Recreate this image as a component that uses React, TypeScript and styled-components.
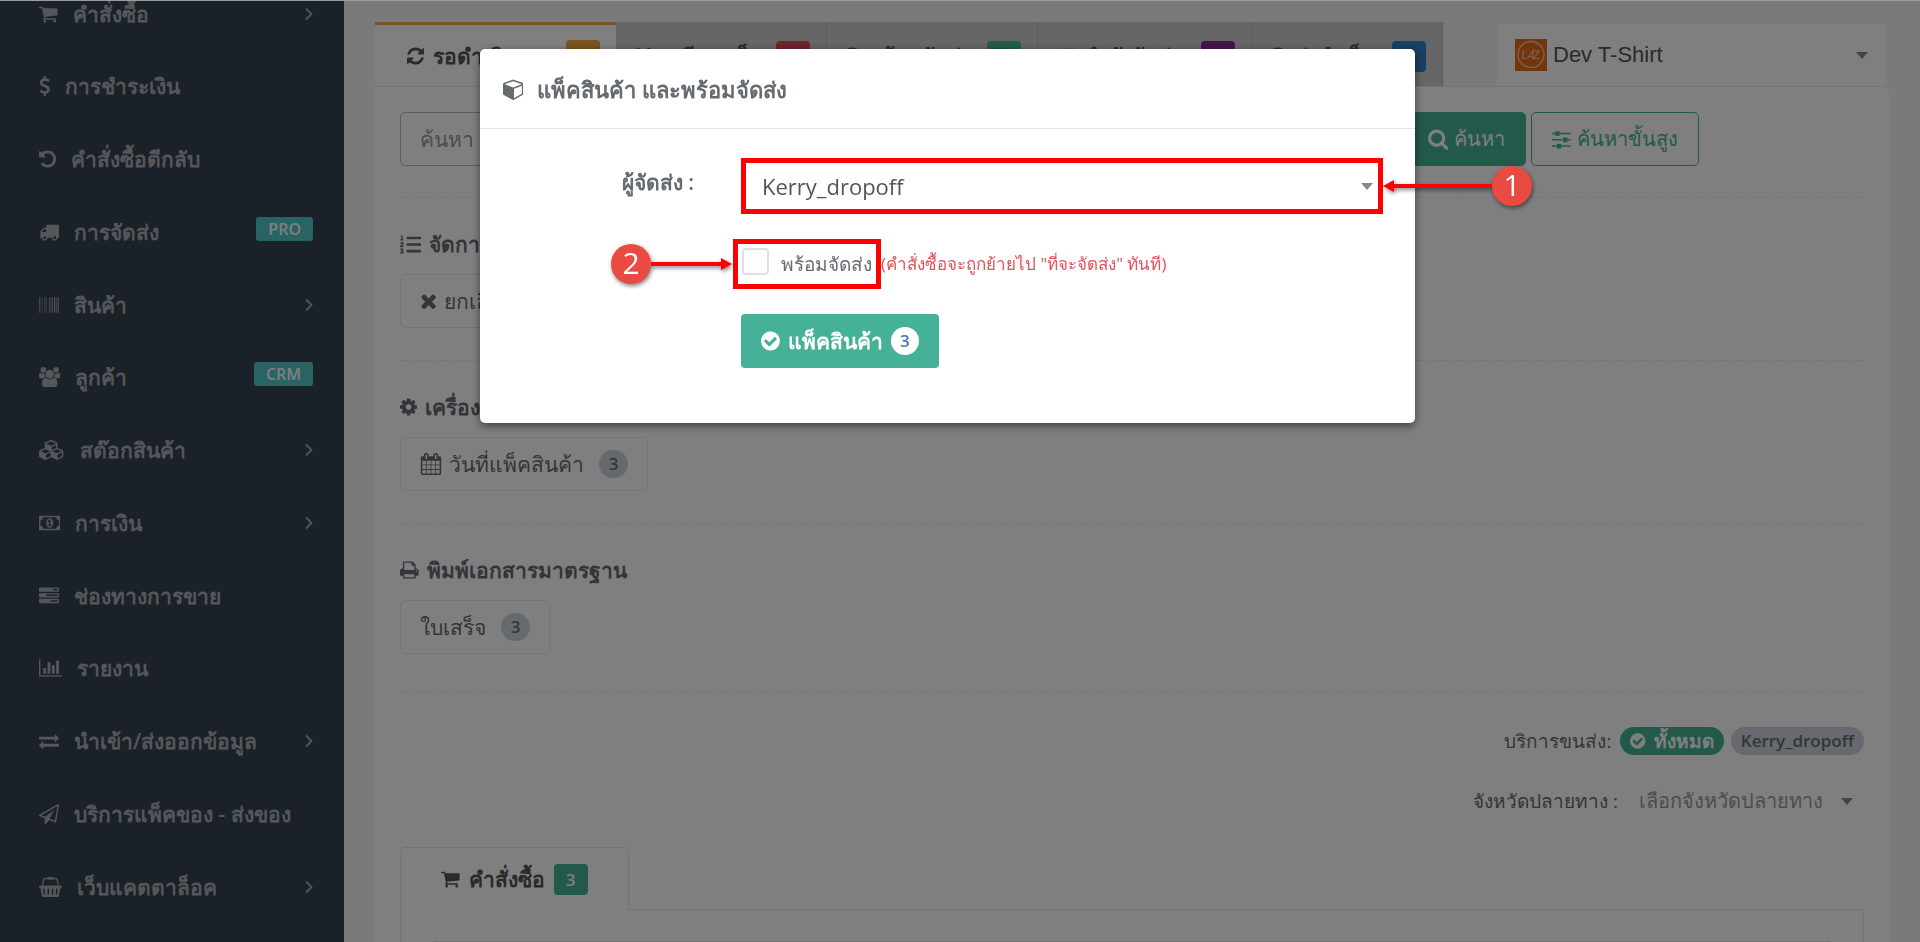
import React from "react";
import styled, { createGlobalStyle } from "styled-components";
import { FaDropbox, FaListOl } from "react-icons/fa";

const GlobalStyle = createGlobalStyle`
  *, *::before, *::after { box-sizing: border-box; }
  body {
    margin: 0;
    background: #f4f4f4;
    color: #666b70;
    font-family: "Open Sans", sans-serif;
    font-size: 21px;
    line-height: 28px;
  }
  button, input, select { font: inherit; color: inherit; margin: 0; }
  button { cursor: pointer; }
`;

/* ---------- icons ---------- */

const ICONS: Record<string, [number, string]> = {
  cart: [1664, "M640 1536q0 52-38 90t-90 38-90-38-38-90 38-90 90-38 90 38 38 90zm896 0q0 52-38 90t-90 38-90-38-38-90 38-90 90-38 90 38 38 90zm128-1088v512q0 24-16.500 42.500t-40.500 21.500l-1044 122q13 60 13 70 0 16-24 64h920q26 0 45 19t19 45-19 45-45 19h-1024q-26 0-45-19t-19-45q0-11 8-31.500t16-36 21.500-40 15.500-29.500l-177-823h-204q-26 0-45-19t-19-45 19-45 45-19h256q16 0 28.500 6.500t19.500 15.500 13 24.500 8 26 5.500 29.500 4.500 26h1201q26 0 45 19t19 45z"],
  dollar: [1024, "M978 1185q0 153-99.500 263.500t-258.500 136.500v175q0 14-9 23t-23 9h-135q-13 0-22.500-9.500t-9.500-22.500v-175q-66-9-127.500-31t-101.500-44.500-74-48-46.500-37.500-17.500-18q-17-21-2-41l103-135q7-10 23-12 15-2 24 9l2 2q113 99 243 125 37 8 74 8 81 0 142.500-43t61.500-122q0-28-15-53t-33.500-42-58.500-37.500-66-32-80-32.500q-39-16-61.500-25t-61.500-26.500-62.500-31-56.500-35.500-53.500-42.500-43.500-49-35.500-58-21-66.500-8.500-78q0-138 98-242t255-134v-180q0-13 9.500-22.500t22.500-9.500h135q14 0 23 9t9 23v176q57 6 110.500 23t87 33.500 63.500 37.500 39 29 15 14q17 18 5 38l-81 146q-8 15-23 16-14 3-27-7-3-3-14.500-12t-39-26.500-58.500-32-74.500-26-85.500-11.500q-95 0-155 43t-60 111q0 26 8.500 48t29.500 41.500 39.500 33 56 31 60.500 27 70 27.500q53 20 81 31.500t76 35 75.500 42.500 62 50 53 63.500 31.500 76.500 13 94z"],
  undo: [1536, "M1536 896q0 156-61 298t-164 245-245 164-298 61q-172 0-327-72.500t-264-204.500q-7-10-6.500-22.500t8.500-20.500l137-138q10-9 25-9 16 2 23 12 73 95 179 147t225 52q104 0 198.500-40.500t163.500-109.500 109.500-163.500 40.500-198.500-40.500-198.500-109.500-163.500-163.500-109.500-198.500-40.500q-98 0-188 35.500t-160 101.500l137 138q31 30 14 69-17 40-59 40h-448q-26 0-45-19t-19-45v-448q0-42 40-59 39-17 69 14l130 129q107-101 244.500-156.500t284.500-55.500q156 0 298 61t245 164 164 245 61 298z"],
  truck: [1792, "M640 1408q0-52-38-90t-90-38-90 38-38 90 38 90 90 38 90-38 38-90zm-384-512h384v-256h-158q-13 0-22 9l-195 195q-9 9-9 22v30zm1280 512q0-52-38-90t-90-38-90 38-38 90 38 90 90 38 90-38 38-90zm256-1088v1024q0 15-4 26.500t-13.500 18.500-16.500 11.500-23.500 6-22.500 2-25.500 0-22.500-.5q0 106-75 181t-181 75-181-75-75-181h-384q0 106-75 181t-181 75-181-75-75-181h-64q-3 0-22.500.5t-25.500 0-22.500-2-23.500-6-16.500-11.500-13.500-18.500-4-26.500q0-26 19-45t45-19v-320q0-8-.5-35t0-38 2.500-34.500 6.500-37 14-30.500 22.500-30l198-198q19-19 50.500-32t58.500-13h160v-192q0-26 19-45t45-19h1024q26 0 45 19t19 45z"],
  barcode: [1792, "M63 1600h-63v-1408h63v1408zm63-1h-32v-1407h32v1407zm220 0h-31v-1407h31v1407zm157 0h-31v-1407h31v1407zm157 0h-62v-1407h62v1407zm315 0h-63v-1407h63v1407zm126 0h-63v-1407h63v1407zm126 0h-63v-1407h63v1407zm220 0h-94v-1407h94v1407zm126 0h-63v-1407h63v1407zm126 0h-31v-1407h31v1407zm94 1h-62v-1408h62v1408z"],
  users: [1920, "M593 896q-162 5-265 128h-134q-82 0-138-40.500t-56-118.500q0-353 124-353 6 0 43.500 21t97.500 42.500 119 21.500q67 0 133-23-5 37-5 66 0 159 81 256zm1071 637q0 120-73 189.500t-194 69.500h-874q-121 0-194-69.500t-73-189.500q0-53 3.500-103.500t14-109 26.500-108.500 43-97.500 62-81 85.500-53.500 111.500-20q10 0 43 21.500t73 48 107 48 135 21.500 135-21.500 107-48 73-48 43-21.500q61 0 111.500 20t85.500 53.500 62 81 43 97.500 26.500 108.500 14 109 3.500 103.500zm-1024-1277q0 106-75 181t-181 75-181-75-75-181 75-181 181-75 181 75 75 181zm704 384q0 159-112.500 271.500t-271.500 112.500-271.500-112.500-112.500-271.500 112.500-271.500 271.500-112.500 271.500 112.500 112.500 271.500zm576 225q0 78-56 118.500t-138 40.500h-134q-103-123-265-128 81-97 81-256 0-29-5-66 66 23 133 23 59 0 119-21.500t97.500-42.500 43.500-21q124 0 124 353zm-128-609q0 106-75 181t-181 75-181-75-75-181 75-181 181-75 181 75 75 181z"],
  cubes: [2304, "M640 1632l384-192v-314l-384 164v342zm-64-454l404-173-404-173-404 173zm1088 454l384-192v-314l-384 164v342zm-64-454l404-173-404-173-404 173zm-448-293l384-165v-266l-384 164v267zm-64-379l441-189-441-189-441 189zm1088 518v416q0 36-19 67t-52 47l-448 224q-25 14-57 14t-57-14l-448-224q-4-2-7-4-2 2-7 4l-448 224q-25 14-57 14t-57-14l-448-224q-33-16-52-47t-19-67v-416q0-38 21.500-70t56.500-48l434-186v-400q0-38 21.500-70t56.500-48l448-192q23-10 50-10t50 10l448 192q35 16 56.500 48t21.500 70v400l434 186q36 16 57 48t21 70z"],
  money: [1920, "M768 1152h384v-96h-128v-448h-114l-148 137 77 80q42-37 55-57h2v288h-128v96zm512-256q0 70-21 142t-59.500 134-101.500 101-138 39-138-39-101.500-101-59.500-134-21-142 21-142 59.500-134 101.500-101 138-39 138 39 101.500 101 59.500 134 21 142zm512 256v-512q-106 0-181-75t-75-181h-1152q0 106-75 181t-181 75v512q106 0 181 75t75 181h1152q0-106 75-181t181-75zm128-832v1152q0 26-19 45t-45 19h-1792q-26 0-45-19t-19-45v-1152q0-26 19-45t45-19h1792q26 0 45 19t19 45z"],
  tasks: [1792, "M1024 1408h640v-128h-640v128zm-384-512h1024v-128h-1024v128zm640-512h384v-128h-384v128zm512 832v256q0 26-19 45t-45 19h-1664q-26 0-45-19t-19-45v-256q0-26 19-45t45-19h1664q26 0 45 19t19 45zm0-512v256q0 26-19 45t-45 19h-1664q-26 0-45-19t-19-45v-256q0-26 19-45t45-19h1664q26 0 45 19t19 45zm0-512v256q0 26-19 45t-45 19h-1664q-26 0-45-19t-19-45v-256q0-26 19-45t45-19h1664q26 0 45 19t19 45z"],
  chart: [2048, "M640 896v512h-256v-512h256zm384-512v1024h-256v-1024h256zm1024 1152v128h-2048v-1536h128v1408h1920zm-640-896v768h-256v-768h256zm384-384v1152h-256v-1152h256z"],
  exchange: [1792, "M1792 1184v192q0 13-9.500 22.500t-22.500 9.500h-1376v192q0 13-9.500 22.500t-22.500 9.500q-12 0-24-10l-319-320q-9-9-9-22 0-14 9-23l320-320q9-9 23-9 13 0 22.500 9.500t9.500 22.500v192h1376q13 0 22.500 9.500t9.500 22.500zm0-544q0 14-9 23l-320 320q-9 9-23 9-13 0-22.500-9.500t-9.500-22.500v-192h-1376q-13 0-22.500-9.500t-9.500-22.500v-192q0-13 9.500-22.500t22.500-9.500h1376v-192q0-14 9-23t23-9q12 0 24 10l319 319q9 9 9 23z"],
  plane: [1792, "M1764 11q33 24 27 64l-256 1536q-5 29-32 45-14 8-31 8-11 0-24-5l-527-215-298 327q-18 21-47 21-14 0-23-4-19-7-30-23.500t-11-36.500v-452l-472-193q-37-14-40-55-3-39 32-59l1664-960q35-21 68 2zm-342 1499l221-1323-1434 827 336 137 863-639-478 797z"],
  basket: [2048, "M1920 768q53 0 90.500 37.500t37.500 90.500-37.500 90.500-90.500 37.500h-15l-115 662q-8 46-44 76t-82 30h-1280q-46 0-82-30t-44-76l-115-662h-15q-53 0-90.500-37.500t-37.500-90.500 37.500-90.500 90.500-37.500h1792zm-1435 800q26-2 43.500-22.500t15.500-46.500l-32-416q-2-26-22.500-43.500t-46.500-15.500-43.500 22.500-15.500 46.500l32 416q2 25 20.500 42t43.500 17h5zm411-64v-416q0-26-19-45t-45-19-45 19-19 45v416q0 26 19 45t45 19 45-19 19-45zm384 0v-416q0-26-19-45t-45-19-45 19-19 45v416q0 26 19 45t45 19 45-19 19-45zm352 5l32-416q2-26-15.500-46.500t-43.500-22.500-46.500 15.500-22.500 43.500l-32 416q-2 26 15.500 46.500t43.500 22.500h5q25 0 43.500-17t20.500-42zm-1156-1217l-93 412h-132l101-441q19-88 89-143.500t160-55.500h167q0-26 19-45t45-19h384q26 0 45 19t19 45h167q90 0 160 55.500t89 143.500l101 441h-132l-93-412q-11-44-45.500-72t-79.500-28h-167q0 26-19 45t-45 19h-384q-26 0-45-19t-19-45h-167q-45 0-79.500 28t-45.500 72z"],
  times: [1408, "M1298 1322q0 40-28 68l-136 136q-28 28-68 28t-68-28l-294-294-294 294q-28 28-68 28t-68-28l-136-136q-28-28-28-68t28-68l294-294-294-294q-28-28-28-68t28-68l136-136q28-28 68-28t68 28l294 294 294-294q28-28 68-28t68 28l136 136q28 28 28 68t-28 68l-294 294 294 294q28 28 28 68z"],
  cog: [1536, "M1024 896q0-106-75-181t-181-75-181 75-75 181 75 181 181 75 181-75 75-181zm512-109v222q0 12-8 23t-20 13l-185 28q-19 54-39 91 35 50 107 138 10 12 10 25t-9 23q-27 37-99 108t-94 71q-12 0-26-9l-138-108q-44 23-91 38-16 136-29 186-7 28-36 28h-222q-14 0-24.500-8.500t-11.500-21.500l-28-184q-49-16-90-37l-141 107q-10 9-25 9-14 0-25-11-126-114-165-168-7-10-7-23 0-12 8-23 15-21 51-66.500t54-70.500q-27-50-41-99l-183-27q-13-2-21-12.500t-8-23.500v-222q0-12 8-23t19-13l186-28q14-46 39-92-40-57-107-138-10-12-10-24 0-10 9-23 26-36 98.500-107.500t94.500-71.500q13 0 26 10l138 107q44-23 91-38 16-136 29-186 7-28 36-28h222q14 0 24.500 8.500t11.500 21.500l28 184q49 16 90 37l142-107q9-9 24-9 13 0 25 10 129 119 165 170 7 8 7 22 0 12-8 23-15 21-51 66.500t-54 70.500q26 50 41 98l183 28q13 2 21 12.500t8 23.500z"],
  calendar: [1792, "M192 1664h288v-288h-288v288zm352 0h320v-288h-320v288zm-352-352h288v-320h-288v320zm352 0h320v-320h-320v320zm-352-384h288v-288h-288v288zm736 736h320v-288h-320v288zm-384-736h320v-288h-320v288zm768 736h288v-288h-288v288zm-384-352h320v-320h-320v320zm-352-864v-288q0-13-9.500-22.500t-22.500-9.500h-64q-13 0-22.500 9.500t-9.500 22.500v288q0 13 9.500 22.500t22.500 9.500h64q13 0 22.500-9.500t9.500-22.500zm736 864h288v-320h-288v320zm-384-384h320v-288h-320v288zm384 0h288v-288h-288v288zm32-480v-288q0-13-9.500-22.500t-22.500-9.500h-64q-13 0-22.500 9.500t-9.500 22.500v288q0 13 9.500 22.500t22.500 9.500h64q13 0 22.500-9.500t9.500-22.500zm384-64v1280q0 52-38 90t-90 38h-1408q-52 0-90-38t-38-90v-1280q0-52 38-90t90-38h128v-96q0-66 47-113t113-47h64q66 0 113 47t47 113v96h384v-96q0-66 47-113t113-47h64q66 0 113 47t47 113v96h128q52 0 90 38t38 90z"],
  print: [1664, "M384 1536h896v-256h-896v256zm0-640h896v-384h-160q-40 0-68-28t-28-68v-160h-640v640zm1152 64q0-26-19-45t-45-19-45 19-19 45 19 45 45 19 45-19 19-45zm128 0v416q0 13-9.500 22.500t-22.500 9.500h-224v160q0 40-28 68t-68 28h-960q-40 0-68-28t-28-68v-160h-224q-13 0-22.500-9.500t-9.500-22.500v-416q0-79 56.500-135.500t135.500-56.500h64v-544q0-40 28-68t68-28h672q40 0 88 20t76 48l152 152q28 28 48 76t20 88v256h64q79 0 135.500 56.500t56.500 135.500z"],
  check: [1536, "M1284 734q0-28-18-46l-91-90q-19-19-45-19t-45 19l-408 407-226-226q-19-19-45-19t-45 19l-91 90q-18 18-18 46 0 27 18 45l362 362q19 19 45 19 27 0 46-19l543-543q18-18 18-45zm252 162q0 209-103 385.500t-279.500 279.500-385.500 103-385.500-103-279.500-279.500-103-385.500 103-385.500 279.500-279.500 385.500-103 385.500 103 279.500 279.500 103 385.500z"],
  search: [1664, "M1152 832q0-185-131.500-316.500t-316.500-131.500-316.500 131.500-131.500 316.500 131.500 316.500 316.500 131.500 316.500-131.500 131.500-316.500zm512 832q0 52-38 90t-90 38q-54 0-90-38l-343-342q-179 124-399 124-143 0-273.500-55.500t-225-150-150-225-55.500-273.500 55.500-273.500 150-225 225-150 273.500-55.500 273.500 55.500 225 150 150 225 55.500 273.500q0 220-124 399l343 343q37 37 37 90z"],
  sliders: [1536, "M352 1408v128h-352v-128h352zm352-128q26 0 45 19t19 45v256q0 26-19 45t-45 19h-256q-26 0-45-19t-19-45v-256q0-26 19-45t45-19h256zm160-384v128h-864v-128h864zm-640-512v128h-224v-128h224zm1312 1024v128h-736v-128h736zm-960-1152q26 0 45 19t19 45v256q0 26-19 45t-45 19h-256q-26 0-45-19t-19-45v-256q0-26 19-45t45-19h256zm640 512q26 0 45 19t19 45v256q0 26-19 45t-45 19h-256q-26 0-45-19t-19-45v-256q0-26 19-45t45-19h256zm320 128v128h-224v-128h224zm0-512v128h-864v-128h864z"],
  refresh: [1536, "M1511 1056q0 5-1 7-64 268-268 434.500t-478 166.500q-146 0-282.500-55t-243.500-157l-129 129q-19 19-45 19t-45-19-19-45v-448q0-26 19-45t45-19h448q26 0 45 19t19 45-19 45l-137 137q71 66 161 102t187 36q134 0 250-65t186-179q11-17 53-117 8-23 30-23h192q13 0 22.500 9.500t9.500 22.500zm25-800v448q0 26-19 45t-45 19h-448q-26 0-45-19t-19-45 19-45l138-138q-148-137-349-137-134 0-250 65t-186 179q-11 17-53 117-8 23-30 23h-199q-13 0-22.500-9.500t-9.500-22.500v-7q65-268 270-434.500t480-166.500q146 0 284 55.500t245 156.500l130-129q19-19 45-19t45 19 19 45z"],
  cube: [1664, "M896 1629l640-349v-636l-640 233v752zm-64-865l698-254-698-254-698 254zm832-252v768q0 35-18 65t-49 47l-704 384q-28 16-61 16t-61-16l-704-384q-31-17-49-47t-18-65v-768q0-40 23-73t61-47l704-256q22-8 44-8t44 8l704 256q38 14 61 47t23 73z"],
};

const Glyph = styled.svg`
  flex: none;
  height: 1em;
  width: auto;
  fill: currentColor;
`;

const Icon = ({ name, size = 20 }: { name: string; size?: number }) => {
  const [width, d] = ICONS[name];
  return (
    <Glyph viewBox={`0 0 ${width} 1792`} fontSize={size} aria-hidden="true">
      <path d={d} />
    </Glyph>
  );
};

const Caret = styled.span`
  flex: none;
  width: 0;
  height: 0;
  border: 6px solid transparent;
  border-top: 7px solid #888;
  border-bottom: 0;
  pointer-events: none;
`;

/* ---------- shell ---------- */

const Shell = styled.div`
  display: flex;
  height: 100vh;
  overflow: hidden;
`;

const Sidebar = styled.nav`
  flex: 0 0 344px;
  overflow: hidden;
  background: #364250;
  color: #a9acb4;
`;

const MenuGroup = styled.ul`
  display: grid;
  row-gap: 1px;
  margin: 0;
  padding: 0;
  list-style: none;
  &:first-child { margin-top: -22px; }
`;

const MenuLink = styled.a`
  display: flex;
  align-items: center;
  height: 72px;
  padding: 0 31px 0 39px;
  color: inherit;
  font-weight: 600;
  text-decoration: none;
  white-space: nowrap;
`;

const MenuText = styled.span`
  flex: 1;
  padding-left: 15px;
`;

const MenuTag = styled.span`
  padding: 0 12px;
  border-radius: 3px;
  background: #50c8c8;
  color: #fff;
  font-size: 16px;
  line-height: 24px;
  font-weight: 600;
  margin-bottom: 6px;
`;

const Chevron = () => (
  <svg width="8" height="14" viewBox="0 0 8 14" fill="none" stroke="currentColor" strokeWidth="1.8" aria-hidden="true">
    <path d="M1 1.5 6.500 7 1 12.500" />
  </svg>
);

type MenuEntry = { icon: string; label: string; tag?: string; more?: boolean };

const MENU: MenuEntry[][] = [
  [{ icon: "cart", label: "คำสั่งซื้อ", more: true }],
  [
    { icon: "dollar", label: "การชำระเงิน" },
    { icon: "undo", label: "คำสั่งซื้อตีกลับ" },
    { icon: "truck", label: "การจัดส่ง", tag: "PRO" },
    { icon: "barcode", label: "สินค้า", more: true },
  ],
  [
    { icon: "users", label: "ลูกค้า", tag: "CRM" },
    { icon: "cubes", label: "สต๊อกสินค้า", more: true },
    { icon: "money", label: "การเงิน", more: true },
    { icon: "tasks", label: "ช่องทางการขาย" },
  ],
  [
    { icon: "chart", label: "รายงาน" },
    { icon: "exchange", label: "นำเข้า/ส่งออกข้อมูล", more: true },
    { icon: "plane", label: "บริการแพ็คของ - ส่งของ" },
    { icon: "basket", label: "เว็บแคตตาล็อค", more: true },
  ],
];

const Main = styled.main`
  flex: 1;
  min-width: 0;
  padding: 22px 31px 0;
`;

/* ---------- status tabs and account ---------- */

const TopBar = styled.div`
  display: flex;
  justify-content: space-between;
  align-items: flex-end;
`;

const Tabs = styled.div`
  display: flex;
  height: 64px;
`;

const Tab = styled.button<{ $active?: boolean; $width: number }>`
  display: flex;
  align-items: center;
  gap: 9px;
  width: ${(p) => p.$width}px;
  padding: ${(p) => (p.$active ? "0 16px 0 32px" : "4px 16px 0 17px")};
  border: 0;
  border-top: ${(p) => (p.$active ? "3px solid #f0a83c" : "0")};
  border-right: ${(p) => (p.$active ? "0" : "1px solid #bbb")};
  background: ${(p) => (p.$active ? "#fff" : "#ccc")};
  color: #555;
  font-weight: 600;
  white-space: nowrap;
`;

const Count = styled.span<{ $color: string }>`
  min-width: 34px;
  height: 31px;
  margin-left: auto;
  padding: 0 12px;
  border-radius: 4px;
  background: ${(p) => p.$color};
  color: #fff;
  font-size: 17px;
  line-height: 32px;
`;

const Account = styled.label`
  display: flex;
  align-items: center;
  width: 390px;
  height: 62px;
  margin-right: 2px;
  padding: 0 19px 0 18px;
  background: #fff;
`;

const AccountSelect = styled.select`
  flex: 1;
  appearance: none;
  border: 0;
  padding: 0 6px;
  background: none;
  color: #555;
  font-family: "Liberation Sans", Arial, sans-serif;
  font-size: 22px;
`;

const Logo = () => (
  <svg width="32" height="32" viewBox="0 0 32 32" aria-hidden="true">
    <rect width="32" height="32" fill="#e8691a" />
    <g fill="none" stroke="#f6c6a0">
      <circle cx="16" cy="15.500" r="13" strokeWidth="1.300" />
      <path d="M8.500 11 7.500 19.500h4M12 20l6-8.500-.5 8.500M14 17.500h3.500M18.500 12h5.500l-5.500 7.500h5.500" strokeWidth="1.200" />
    </g>
  </svg>
);

const Panel = styled.section`
  border-top: 1px solid #eaeaea;
  border-radius: 0 5px 0 0;
  background: #fff;
  padding: 25px 25px 0;
  min-height: 100vh;
`;

/* ---------- search ---------- */

const SearchRow = styled.form`
  display: flex;
  width: 1299px;
  max-width: 100%;
  height: 54px;
`;

const SearchInput = styled.input`
  flex: 1;
  min-width: 0;
  padding: 0 19px;
  border: 1px solid #bbb;
  border-radius: 5px 0 0 5px;
  background: #fff;
  &::placeholder { color: #999; opacity: 1; }
`;

const SearchButton = styled.button<{ $outline?: boolean }>`
  display: flex;
  align-items: center;
  gap: 6px;
  margin-left: ${(p) => (p.$outline ? "5px" : "0")};
  padding: 0 20px;
  border: 1px solid #45b297;
  border-radius: ${(p) => (p.$outline ? "5px" : "0 5px 5px 0")};
  background: ${(p) => (p.$outline ? "#fff" : "#45b297")};
  color: ${(p) => (p.$outline ? "#45b297" : "#fff")};
  font-size: 20px;
  white-space: nowrap;
`;

/* ---------- bulk actions ---------- */

const Section = styled.section<{ $last?: boolean }>`
  padding: 32px 0 ${(p) => (p.$last ? 38 : 32)}px;
  border-bottom: 1px dashed #eaeaea;
`;

const SearchSection = styled.section`
  padding-bottom: 31px;
  border-bottom: 1px dashed #eaeaea;
`;

const SectionTitle = styled.h2`
  display: flex;
  align-items: center;
  gap: 8px;
  height: 28px;
  margin: 0 0 16px;
  font-size: 21px;
  font-weight: 600;
`;

const ActionButton = styled.button`
  display: flex;
  align-items: center;
  gap: 7px;
  height: 54px;
  padding: 0 19px;
  border: 1px solid #eaeaea;
  border-radius: 5px;
  background: #fff;
`;

const Round = styled.span<{ $light?: boolean }>`
  min-width: ${(p) => (p.$light ? 28 : 29)}px;
  height: 28px;
  margin-left: ${(p) => (p.$light ? 0 : 8)}px;
  border-radius: 14px;
  background: ${(p) => (p.$light ? "#fff" : "#cdd5dc")};
  color: ${(p) => (p.$light ? "#4a76b8" : "inherit")};
  font-size: 17px;
  line-height: 28px;
  font-weight: 600;
  text-align: center;
`;

/* ---------- filters ---------- */

const Filters = styled.div`
  display: flex;
  flex-direction: column;
  align-items: flex-end;
  gap: 22px;
  padding: 34px 0 22px;
`;

const FilterRow = styled.div<{ $tall?: boolean }>`
  display: flex;
  align-items: center;
  height: ${(p) => (p.$tall ? 48 : 28)}px;
  gap: 7px;
`;

const FilterLabel = styled.span`
  padding-right: 2px;
  font-size: 19px;
`;

const Pill = styled.button<{ $on?: boolean }>`
  display: flex;
  align-items: center;
  gap: 8px;
  height: 28px;
  padding: 0 10px;
  border: 0;
  border-radius: 14px;
  background: ${(p) => (p.$on ? "#45b297" : "#cdd5dc")};
  color: ${(p) => (p.$on ? "#fff" : "inherit")};
  font-size: ${(p) => (p.$on ? 19 : 17)}px;
  font-weight: 600;
`;

const ProvinceSelect = styled.span`
  display: flex;
  align-items: center;
  padding: 0 11px 0 12px;
  gap: 18px;
  select {
    appearance: none;
    border: 0;
    padding: 0;
    background: none;
    color: #999;
    font-size: 20px;
  }
`;

/* ---------- order list ---------- */

const OrderTabs = styled.div`
  display: flex;
  &::after {
    content: "";
    flex: 1;
    border-bottom: 1px solid #e4e4e4;
  }
`;

const OrderTab = styled.button`
  display: flex;
  align-items: center;
  gap: 9px;
  height: 63px;
  padding: 0 40px;
  border: 1px solid #e4e4e4;
  border-bottom: 0;
  border-radius: 5px 5px 0 0;
  background: #fff;
  color: #555;
  font-weight: 600;
`;

const OrderBody = styled.div`
  height: 200px;
  padding: 31px 32px 0;
  border: solid #e4e4e4;
  border-width: 0 1px;
`;

const OrderTable = styled.div`
  height: 100px;
  border-top: 1px solid #e4e4e4;
`;

/* ---------- dialog ---------- */

const Overlay = styled.div`
  position: fixed;
  inset: 0;
  display: flex;
  justify-content: center;
  align-items: flex-start;
  padding: 48px 25px 0 0;
  border-top: 1px solid #9c9c9c;
  background: rgba(0, 0, 0, 0.5);
  background-clip: padding-box;
`;

const Dialog = styled.form`
  width: 935px;
  max-width: 100%;
  border-radius: 5px;
  background: #fff;
  box-shadow: 0 3px 9px rgba(0, 0, 0, 0.5);
`;

const DialogHeader = styled.h1`
  display: flex;
  align-items: center;
  gap: 14px;
  height: 80px;
  margin: 0;
  padding: 0 23px;
  border-bottom: 1px solid #e5e5e5;
  font-size: 22px;
  font-weight: 700;
`;

const DialogBody = styled.div`
  display: grid;
  grid-template-columns: 214px 1fr;
  column-gap: 47px;
  padding: 29px 32px 55px 0;
`;

const FieldLabel = styled.label`
  padding-top: 10px;
  text-align: right;
  font-weight: 600;
`;

const Highlight = styled.div`
  position: relative;
  display: flex;
  align-items: center;
  border: 5px solid #f00;
`;

const CourierField = styled(Highlight)`
  height: 56px;
  padding-right: 5px;
  select {
    flex: 1;
    height: 46px;
    padding: 0 16px;
    appearance: none;
    border: 0;
    background: none;
    color: #555;
    font-size: 22px;
  }
`;

const ReadyRow = styled.div`
  display: flex;
  grid-column: 2;
  margin: 25px 0 25px -8px;
  align-items: center;
`;

const ReadyField = styled(Highlight)`
  height: 50px;
  padding: 0 4px;
  gap: 12px;
  white-space: nowrap;
  font-size: 19px;
  input {
    width: 27px;
    height: 27px;
    margin-bottom: 5px;
    appearance: none;
    border: 2px solid #e0e0e0;
    border-radius: 4px;
    background: #fdfdfd;
  }
`;

const Note = styled.span`
  color: #e7505a;
  font-size: 17px;
  white-space: nowrap;
`;

const Submit = styled.button`
  display: flex;
  grid-column: 2;
  justify-self: start;
  align-items: center;
  gap: 8px;
  height: 54px;
  padding: 0 20px;
  border: 0;
  border-radius: 4px;
  background: #45b297;
  color: #fff;
  font-weight: 600;
`;

/* ---------- numbered callouts ---------- */

const Callout = styled.div<{ $side: "left" | "right" }>`
  position: absolute;
  top: 50%;
  ${(p) => (p.$side === "right" ? "left: 100%; margin-left: 5px;" : "right: 100%; margin-right: 6px;")}
  display: flex;
  flex-direction: ${(p) => (p.$side === "right" ? "row" : "row-reverse")};
  align-items: center;
  transform: translateY(-50%);
  filter: drop-shadow(1px 2px 2px rgba(0, 0, 0, 0.5));
`;

const Arrow = styled.svg<{ $flip?: boolean }>`
  ${(p) => p.$flip && "transform: scaleX(-1);"}
`;

const Step = styled.span`
  width: 40px;
  height: 40px;
  border-radius: 50%;
  background: #e94b43;
  color: #fff;
  font-size: 30px;
  line-height: 38px;
  text-align: center;
`;

const StepCallout = ({ side, step, length }: { side: "left" | "right"; step: number; length: number }) => (
  <Callout $side={side}>
    <Arrow $flip={side === "left"} width={length} height="12" viewBox={`0 0 ${length} 12`} fill="#f00">
      <path d={`M0 6 11 0v4h${length - 11}v4h-${length - 11}v4z`} />
    </Arrow>
    <Step>{step}</Step>
  </Callout>
);

const App = () => (
  <>
    <GlobalStyle />
    <Shell>
      <Sidebar>
        {MENU.map((group) => (
          <MenuGroup key={group[0].icon}>
            {group.map((item) => (
              <li key={item.icon}>
                <MenuLink href="#">
                  <Icon name={item.icon} />
                  <MenuText>{item.label}</MenuText>
                  {item.tag && <MenuTag>{item.tag}</MenuTag>}
                  {item.more && <Chevron />}
                </MenuLink>
              </li>
            ))}
          </MenuGroup>
        ))}
      </Sidebar>
      <Main>
        <TopBar>
          <Tabs>
            <Tab $active $width={241}><Icon name="refresh" />รอดำเนินการ<Count $color="#f0a83c">3</Count></Tab>
            <Tab $width={211}><FaDropbox aria-hidden="true" />เตรียมแพ็ค<Count $color="#dc4a5b">0</Count></Tab>
            <Tab $width={211}><Icon name="check" />พร้อมจัดส่ง<Count $color="#45b297">0</Count></Tab>
            <Tab $width={214}><Icon name="truck" />กำลังจัดส่ง<Count $color="#862d91">0</Count></Tab>
            <Tab $width={191}><Icon name="check" />ส่งสำเร็จ<Count $color="#3482c4">0</Count></Tab>
          </Tabs>
          <Account>
            <Logo />
            <AccountSelect aria-label="ร้านค้า"><option>Dev T-Shirt</option></AccountSelect>
            <Caret />
          </Account>
        </TopBar>
        <Panel>
          <SearchSection>
            <SearchRow>
              <SearchInput placeholder="ค้นหา ..." aria-label="ค้นหา" />
              <SearchButton type="button"><Icon name="search" size={22} />ค้นหา</SearchButton>
              <SearchButton type="button" $outline><Icon name="sliders" size={22} />ค้นหาขั้นสูง</SearchButton>
            </SearchRow>
          </SearchSection>
          <Section>
            <SectionTitle><FaListOl aria-hidden="true" />จัดการ</SectionTitle>
            <ActionButton><Icon name="times" size={22} />ยกเลิก</ActionButton>
          </Section>
          <Section>
            <SectionTitle><Icon name="cog" />เครื่องมือ</SectionTitle>
            <ActionButton><Icon name="calendar" size={22} />วันที่แพ็คสินค้า<Round>3</Round></ActionButton>
          </Section>
          <Section $last>
            <SectionTitle><Icon name="print" />พิมพ์เอกสารมาตรฐาน</SectionTitle>
            <ActionButton>ใบเสร็จ<Round>3</Round></ActionButton>
          </Section>
          <Filters>
            <FilterRow>
              <FilterLabel>บริการขนส่ง:</FilterLabel>
              <Pill $on><Icon name="check" size={18} />ทั้งหมด</Pill>
              <Pill>Kerry_dropoff</Pill>
            </FilterRow>
            <FilterRow $tall>
              <FilterLabel as="label" htmlFor="province">จังหวัดปลายทาง :</FilterLabel>
              <ProvinceSelect>
                <select id="province"><option>เลือกจังหวัดปลายทาง</option></select>
                <Caret />
              </ProvinceSelect>
            </FilterRow>
          </Filters>
          <OrderTabs>
            <OrderTab><Icon name="cart" />คำสั่งซื้อ<Count $color="#45b297">3</Count></OrderTab>
          </OrderTabs>
          <OrderBody><OrderTable /></OrderBody>
        </Panel>
      </Main>
    </Shell>
    <Overlay>
      <Dialog role="dialog" aria-modal="true" aria-labelledby="pack-title">
        <DialogHeader id="pack-title"><Icon name="cube" size={22} />แพ็คสินค้า และพร้อมจัดส่ง</DialogHeader>
        <DialogBody>
          <FieldLabel htmlFor="courier">ผู้จัดส่ง :</FieldLabel>
          <CourierField>
            <select id="courier"><option>Kerry_dropoff</option></select>
            <Caret />
            <StepCallout side="right" step={1} length={109} />
          </CourierField>
          <ReadyRow>
            <ReadyField>
              <input type="checkbox" id="ready" />
              <label htmlFor="ready">พร้อมจัดส่ง</label>
              <StepCallout side="left" step={2} length={81} />
            </ReadyField>
            <Note>(คำสั่งซื้อจะถูกย้ายไป "ที่จะจัดส่ง" ทันที)</Note>
          </ReadyRow>
          <Submit type="button"><Icon name="check" size={22} />แพ็คสินค้า<Round $light>3</Round></Submit>
        </DialogBody>
      </Dialog>
    </Overlay>
  </>
);

export default App;
